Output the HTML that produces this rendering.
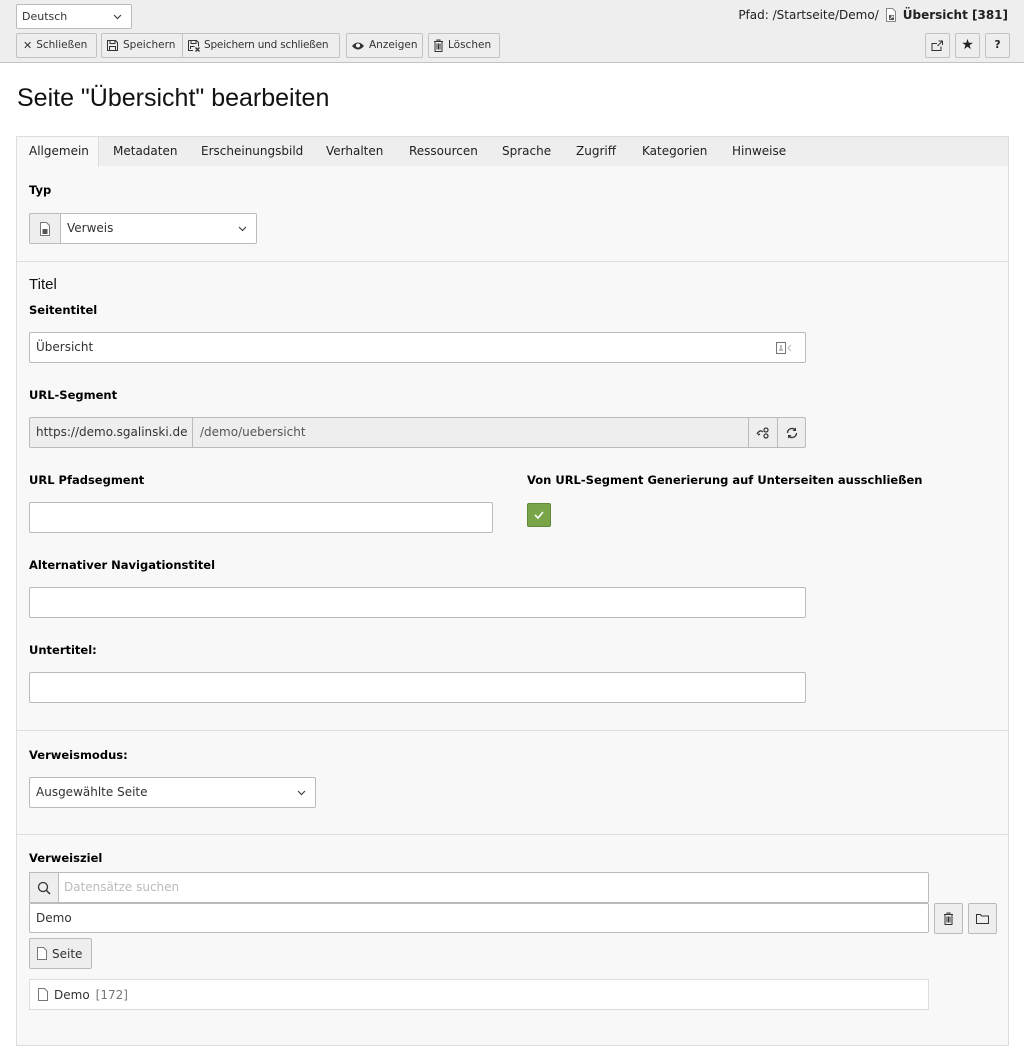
<!DOCTYPE html>
<html><head><meta charset="utf-8"><style>
*{box-sizing:border-box;margin:0;padding:0}
body{width:1024px;height:1050px;background:#fff;font-family:"DejaVu Sans",Verdana,sans-serif;font-size:11.5px;color:#000;position:relative;overflow:hidden}
.a{position:absolute}
svg{flex:none}
.top{left:0;top:0;width:1024px;height:63px;background:#eee;border-bottom:1px solid #c3c3c3}
.btn{position:absolute;height:25px;background:#eee;border:1px solid #c3c3c3;border-radius:2px;font-size:10.5px;line-height:23px;padding:0 4px;white-space:nowrap;color:#333;display:flex;align-items:center;gap:4px;overflow:hidden}
.sel,.inp{position:absolute;background:#fff;border:1px solid #bbb;border-radius:2px;height:31px;line-height:29px;padding:0 6px;font-size:12px;color:#333}
.chev{position:absolute;right:9px;top:50%;margin-top:-3px}
.lbl{position:absolute;left:29px;font-weight:bold;font-size:11.5px;color:#000}
.panel{left:16px;top:166px;width:993px;height:880px;background:#f8f8f8;border:1px solid #ddd;border-top:none}
.sep{position:absolute;left:16px;width:993px;height:1px;background:#ddd}
.tab{position:absolute;top:144px;font-size:12px;color:#212121}
.ib{position:absolute;background:#eee;border:1px solid #bbb;height:31px;border-radius:2px}
</style></head><body>
<div class="a top"></div>
<div class="sel" style="left:16px;top:4px;width:116px;height:25px;line-height:23px;font-size:11px;padding-left:5px">Deutsch<svg class="chev" width="9" height="6" viewBox="0 0 9 6"><path d="M1 1l3.5 3.5L8 1" fill="none" stroke="#444" stroke-width="1.2"/></svg></div>
<div class="btn" style="left:16px;top:33px;width:81px;padding-left:6px"><b style="font-size:11px">✕</b>Schließen</div>
<div class="btn" style="left:101px;top:33px;width:82px;border-radius:2px 0 0 2px"><svg width="13" height="13" viewBox="0 0 13 13"><path d="M1.5 1.5h8l2 2v8h-10z M4 1.5v3h5v-3 M3.5 11.5v-4h6v4" fill="none" stroke="#333"/></svg>Speichern</div>
<div class="btn" style="left:182px;top:33px;width:158px;border-radius:0 2px 2px 0;gap:3px"><svg width="14" height="14" viewBox="0 0 14 14"><path d="M1.5 1.5h8l2 2v4 M6 11.5h-4.5v-10 M4 1.5v3h5v-3 M3.5 10v-2.5h4" fill="none" stroke="#333"/><path d="M8.5 8.5l4 4M12.5 8.5l-4 4" stroke="#333" stroke-width="1.4"/></svg><span style="letter-spacing:-0.2px">Speichern und schließen</span></div>
<div class="btn" style="left:346px;top:33px;width:77px"><svg width="14" height="10" viewBox="0 0 14 10"><path d="M1 5q6-7 12 0q-6 7-12 0z" fill="#333"/><circle cx="7" cy="4.5" r="2" fill="#fff"/></svg>Anzeigen</div>
<div class="btn" style="left:428px;top:33px;width:72px"><svg width="11" height="13" viewBox="0 0 11 13"><path d="M1 2.5h9M4 2.5v-1.5h3v1.5M2 2.5v10h7v-10M4 4.5v6M5.5 4.5v6M7 4.5v6" fill="none" stroke="#333"/></svg>Löschen</div>
<div class="a" style="right:16px;top:8px;font-size:12px;color:#212121;display:flex;align-items:center;gap:5px">Pfad: /Startseite/Demo/ <svg width="14" height="14" viewBox="0 0 14 14"><path d="M2.5.5h6l3 3v10h-9z" fill="#fff" stroke="#888"/><rect x="5" y="7" width="5" height="5" fill="#555"/><path d="M6 11l3-3M7 8h2v2" stroke="#fff" stroke-width=".8" fill="none"/></svg><b>Übersicht [381]</b></div>
<div class="btn" style="left:925px;top:33px;width:25px;justify-content:center;padding:0"><svg width="13" height="12" viewBox="0 0 13 12"><path d="M6 3.5h-5v7h9v-4M7.5 1h4v4M11.5 1l-5 5" fill="none" stroke="#333"/></svg></div>
<div class="btn" style="left:955px;top:33px;width:25px;justify-content:center;padding:0;font-size:14px;color:#222">★</div>
<div class="btn" style="left:985px;top:33px;width:25px;justify-content:center;padding:0;font-weight:bold;color:#222">?</div>
<div class="a" style="left:17px;top:84px;font-family:'Liberation Sans',sans-serif;font-size:25px;color:#111">Seite "Übersicht" bearbeiten</div>
<div class="a" style="left:16px;top:136px;width:993px;height:31px;background:#eee;border:1px solid #ddd"></div>
<div class="a" style="left:16px;top:136px;width:83px;height:31px;background:#f8f8f8;border:1px solid #ddd;border-bottom:none;z-index:2"></div>
<div class="a panel"></div>
<div class="tab" style="left:29px;z-index:3">Allgemein</div>
<div class="tab" style="left:113px">Metadaten</div>
<div class="tab" style="left:201px">Erscheinungsbild</div>
<div class="tab" style="left:326px">Verhalten</div>
<div class="tab" style="left:409px">Ressourcen</div>
<div class="tab" style="left:502px">Sprache</div>
<div class="tab" style="left:576px">Zugriff</div>
<div class="tab" style="left:642px">Kategorien</div>
<div class="tab" style="left:732px">Hinweise</div>
<div class="lbl" style="top:183px">Typ</div>
<div class="sel" style="left:29px;top:213px;width:228px;padding-left:37px">Verweis<svg class="chev" width="9" height="6" viewBox="0 0 9 6"><path d="M1 1l3.5 3.5L8 1" fill="none" stroke="#444" stroke-width="1.2"/></svg></div>
<div class="a" style="left:29px;top:213px;width:32px;height:31px;background:#eee;border:1px solid #bbb;border-radius:2px 0 0 2px;display:flex;align-items:center;justify-content:center"><svg width="12" height="14" viewBox="0 0 12 14"><path d="M1.5.5h6l3 3v10h-9z" fill="#fff" stroke="#777"/><rect x="3.5" y="7" width="5" height="5" fill="#555"/></svg></div>
<div class="sep" style="top:261px"></div>
<div class="a" style="left:29px;top:276px;font-size:15px;color:#111;font-family:'Liberation Sans',sans-serif">Titel</div>
<div class="lbl" style="top:303px">Seitentitel</div>
<div class="inp" style="left:29px;top:332px;width:777px">Übersicht<svg class="a" style="right:12px;top:8px" width="18" height="14" viewBox="0 0 18 14"><rect x="1.5" y="1.5" width="9" height="11" fill="none" stroke="#777"/><path d="M4 9h4M6 4v4" stroke="#777"/><path d="M16 4l-3 3 3 3" fill="none" stroke="#bbb"/></svg></div>
<div class="lbl" style="top:388px">URL-Segment</div>
<div class="ib" style="left:29px;top:417px;width:164px;line-height:29px;padding-left:6px;font-size:12px;color:#333;border-radius:2px 0 0 2px">https://demo.sgalinski.de</div>
<div class="ib" style="left:192px;top:417px;width:557px;line-height:29px;padding-left:7px;font-size:12px;color:#555;border-radius:0">/demo/uebersicht</div>
<div class="ib" style="left:748px;top:417px;width:30px;border-radius:0;display:flex;align-items:center;justify-content:center"><svg width="14" height="14" viewBox="0 0 14 14"><path d="M1 8q3-5 6-2M2 9l2-1" fill="none" stroke="#333" stroke-width="1.3"/><circle cx="10" cy="4" r="2" fill="none" stroke="#333" stroke-width="1.2"/><circle cx="10" cy="10" r="2" fill="none" stroke="#333" stroke-width="1.2"/></svg></div>
<div class="ib" style="left:777px;top:417px;width:29px;display:flex;align-items:center;justify-content:center"><svg width="14" height="14" viewBox="0 0 14 14"><path d="M2.5 7a4.5 4.5 0 0 1 8-2.8M11.5 7a4.5 4.5 0 0 1-8 2.8" fill="none" stroke="#333" stroke-width="1.3"/><path d="M11 1.5v3.5h-3.5z M3 12.5v-3.5h3.5z" fill="#333"/></svg></div>
<div class="lbl" style="top:473px">URL Pfadsegment</div>
<div class="lbl" style="top:473px;left:527px">Von URL-Segment Generierung auf Unterseiten ausschließen</div>
<div class="inp" style="left:29px;top:502px;width:464px"></div>
<div class="a" style="left:527px;top:503px;width:24px;height:24px;background:#79a548;border:1px solid #5f8a36;border-radius:2px;display:flex;align-items:center;justify-content:center"><svg width="10" height="8" viewBox="0 0 10 8"><path d="M1 4l3 3 5-6" fill="none" stroke="#fff" stroke-width="1.6"/></svg></div>
<div class="lbl" style="top:558px">Alternativer Navigationstitel</div>
<div class="inp" style="left:29px;top:587px;width:777px"></div>
<div class="lbl" style="top:643px">Untertitel:</div>
<div class="inp" style="left:29px;top:672px;width:777px"></div>
<div class="sep" style="top:730px"></div>
<div class="lbl" style="top:748px">Verweismodus:</div>
<div class="sel" style="left:29px;top:777px;width:287px">Ausgewählte Seite<svg class="chev" width="9" height="6" viewBox="0 0 9 6"><path d="M1 1l3.5 3.5L8 1" fill="none" stroke="#444" stroke-width="1.2"/></svg></div>
<div class="sep" style="top:834px"></div>
<div class="lbl" style="top:851px">Verweisziel</div>
<div class="inp" style="left:29px;top:872px;width:900px;padding-left:34px;color:#bbb">Datensätze suchen</div>
<div class="a" style="left:29px;top:872px;width:30px;height:31px;background:#eee;border:1px solid #bbb;display:flex;align-items:center;justify-content:center"><svg width="14" height="14" viewBox="0 0 14 14"><circle cx="6" cy="6" r="4.5" fill="none" stroke="#333" stroke-width="1.3"/><path d="M9 9l4 4" stroke="#333" stroke-width="1.5"/></svg></div>
<div class="inp" style="left:29px;top:903px;width:900px;height:30px;line-height:28px">Demo</div>
<div class="ib" style="left:934px;top:903px;width:29px;height:31px;display:flex;align-items:center;justify-content:center"><svg width="11" height="13" viewBox="0 0 11 13"><path d="M1 2.5h9M4 2.5v-1.5h3v1.5M2 2.5v10h7v-10M4 4.5v6M5.5 4.5v6M7 4.5v6" fill="none" stroke="#333"/></svg></div>
<div class="ib" style="left:968px;top:903px;width:29px;height:31px;display:flex;align-items:center;justify-content:center"><svg width="13" height="11" viewBox="0 0 13 11"><path d="M.5 1.5h4l1 1.5h7v7.5h-12z" fill="none" stroke="#333"/></svg></div>
<div class="ib" style="left:29px;top:938px;width:63px;height:31px;display:flex;align-items:center;gap:5px;padding-left:7px;font-size:12px;color:#333"><svg width="10" height="13" viewBox="0 0 10 13"><path d="M.5.5h6l3 3v9h-9z" fill="#fff" stroke="#777"/></svg>Seite</div>
<div class="a" style="left:29px;top:979px;width:900px;height:31px;background:#fff;border:1px solid #ddd;display:flex;align-items:center;gap:6px;padding-left:8px;font-size:12px;color:#333"><svg width="10" height="13" viewBox="0 0 10 13"><path d="M.5.5h6l3 3v9h-9z" fill="#fff" stroke="#777"/></svg>Demo <span style="color:#777">[172]</span></div>
</body></html>
